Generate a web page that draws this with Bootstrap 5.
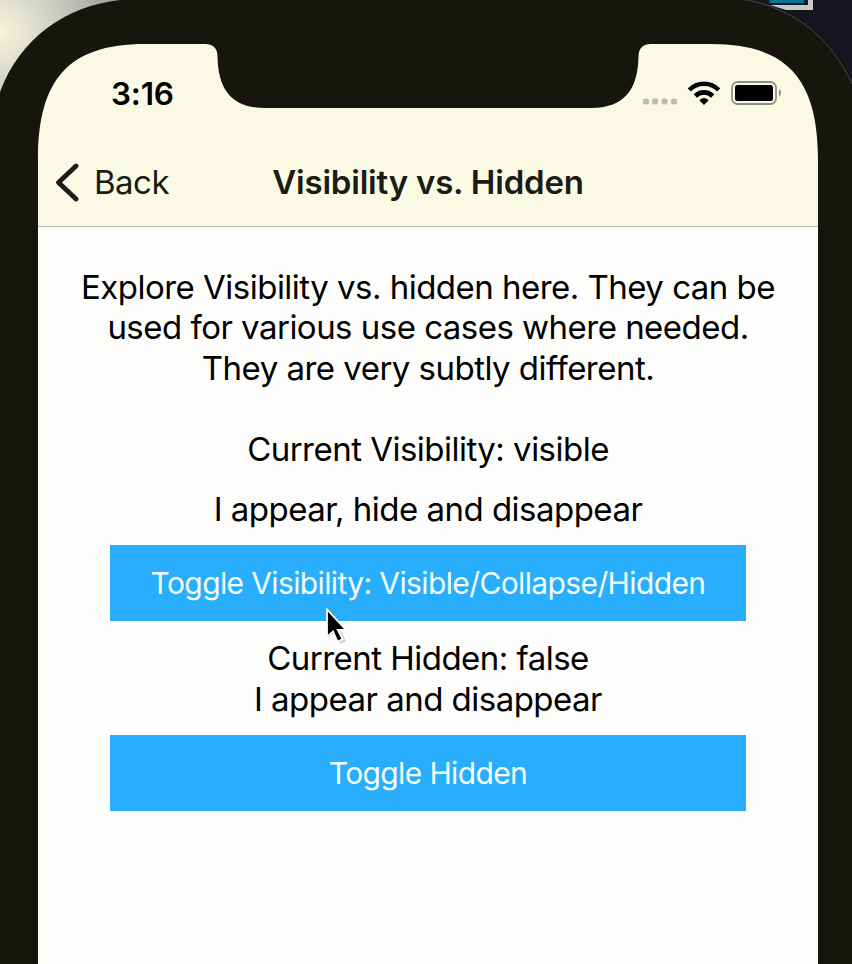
<!DOCTYPE html>
<html lang="en">
<head>
<meta charset="utf-8">
<meta name="viewport" content="width=device-width, initial-scale=1">
<title>Visibility vs. Hidden</title>
<link href="https://cdn.jsdelivr.net/npm/bootstrap@5.3.0/dist/css/bootstrap.min.css" rel="stylesheet">
<style>
body{font-family:Inter,"Liberation Sans",sans-serif;color:#000;background:#16160f}
.stage{width:852px;height:964px}
.frame-art{left:0;top:0;z-index:0}
.phone{z-index:1;margin:0 34px 0 38px;height:964px}
.status{height:138px;padding:78px 37px 0 73px}
.clock{font-size:31.5px;font-weight:600;line-height:32px;letter-spacing:-.2px}
.title-bar{height:89px;border-bottom:1px solid #b5b5b0;color:#1c1c16}
.title-bar .side{width:180px;padding-left:17px;font-size:33px;letter-spacing:-.5px}
.side span{margin-left:15px}
.title-bar .side,.title-bar h1{padding-top:2px}
.title-bar h1{font-size:33px;font-weight:600;letter-spacing:-.2px}
.content{font-size:33px;line-height:40.3px;padding-top:40px;white-space:nowrap;letter-spacing:-.52px}
.intro{margin:0 0 41px}
.vis-state{margin:0 0 20px}
.vis-demo{margin:0 0 16px}
.hid-demo{margin:17px 0 16px}
.btn-sky{--bs-btn-color:#f4fcf8;--bs-btn-bg:#28aefc;--bs-btn-border-width:0;--bs-btn-border-radius:0;width:636px;height:76px;font-size:30px;letter-spacing:-.62px}
.pointer{left:322px;top:604px;z-index:3}
</style>
</head>
<body>
<div class="stage position-relative overflow-hidden">
<svg class="frame-art position-absolute" width="852" height="964" viewBox="0 0 852 964">
<defs><radialGradient id="wall" gradientUnits="userSpaceOnUse" cx="0" cy="32" r="115"><stop offset="0" stop-color="#f6f6da"/><stop offset=".35" stop-color="#dadacc"/><stop offset="1" stop-color="#a2a2a4"/></radialGradient></defs>
<rect width="852" height="964" fill="#16160f"/>
<path d="M0 0H120C66 6 20 38 0 92Z" fill="url(#wall)"/>
<path d="M740 0H852V84C833 43 797 8 740 0Z" fill="#151520"/>
<path d="M769 0H813V10H786L770 5Z" fill="#c9c9c3"/><path d="M769 0H808V5H770Z" fill="#101830"/><path d="M770 0H804V3H770Z" fill="#087590"/>
<path d="M740 -1C797 7 833 42 852 84" fill="none" stroke="#48483f"/>
<path d="M38 226V160C38 80 68 44 145 44H205Q217 44 217.500 56C218 90 232 108 265 108H591C624 108 638 90 638.500 56Q639 44 651 44H711C788 44 818 80 818 160V226Z" fill="#fafae4"/>
<path d="M38 226H818V964H38Z" fill="#fdfdfb"/>
</svg>
<main class="phone position-relative">
<div class="status d-flex justify-content-between align-items-start">
<span class="clock">3:16</span>
<svg width="140" height="30" viewBox="641 78 140 30">
<g fill="#bdbdad"><rect x="643" y="98.500" width="6" height="6" rx="2"/><rect x="652" y="98.500" width="6" height="6" rx="2"/><rect x="661.500" y="98.500" width="6" height="6" rx="2"/><rect x="671" y="98.500" width="6" height="6" rx="2"/></g>
<g fill="none" stroke="#000" stroke-width="4.600"><path d="M689.300 90A20.500 20.500 0 0 1 718.700 90"/><path d="M695.300 96A12.300 12.300 0 0 1 712.700 96"/></g>
<path d="M704 105L699.400 100.300Q704 95.500 708.600 100.300Z"/>
<rect x="732" y="82" width="44" height="22" rx="5.500" fill="none" stroke="#8f8f80" stroke-width="1.800"/>
<rect x="735" y="85" width="38" height="16" rx="2.500"/><path d="M779 89.500Q781.500 90.500 781 93T779 97Z" fill="#8f8f80"/>
</svg>
</div>
<header class="title-bar d-flex align-items-center">
<div class="side d-flex align-items-center"><svg width="24" height="40" viewBox="0 0 24 40"><path d="M21 3L3.500 19.500L21 36" fill="none" stroke="#1c1c16" stroke-width="4.800" stroke-linecap="round" stroke-linejoin="round"/></svg><span>Back</span></div>
<h1 class="m-0 flex-grow-1 text-center">Visibility vs. Hidden</h1>
<div class="side"></div>
</header>
<section class="content d-flex flex-column align-items-center text-center">
<p class="intro">Explore Visibility vs. hidden here. They can be<br>used for various use cases where needed.<br>They are very subtly different.</p>
<p class="vis-state">Current Visibility: visible</p>
<p class="vis-demo">I appear, hide and disappear</p>
<button class="btn btn-sky p-0" type="button">Toggle Visibility: Visible/Collapse/Hidden</button>
<p class="hid-demo">Current Hidden: false<br>I appear and disappear</p>
<button class="btn btn-sky p-0" type="button">Toggle Hidden</button>
</section>
</main>
<svg class="pointer position-absolute" width="30" height="42" viewBox="322 604 30 42"><path d="M328 612V638L334 633L340 644L346 641L341 631H348Z" fill="#777" opacity=".35"/><path d="M327 609.500V637L333 631.500L337.500 641.500L342.500 639.200L337.800 630H346Z" fill="#000" stroke="#fff" stroke-width="1.800"/></svg>
</div>
<script src="https://cdn.jsdelivr.net/npm/bootstrap@5.3.0/dist/js/bootstrap.bundle.min.js"></script>
</body>
</html>
